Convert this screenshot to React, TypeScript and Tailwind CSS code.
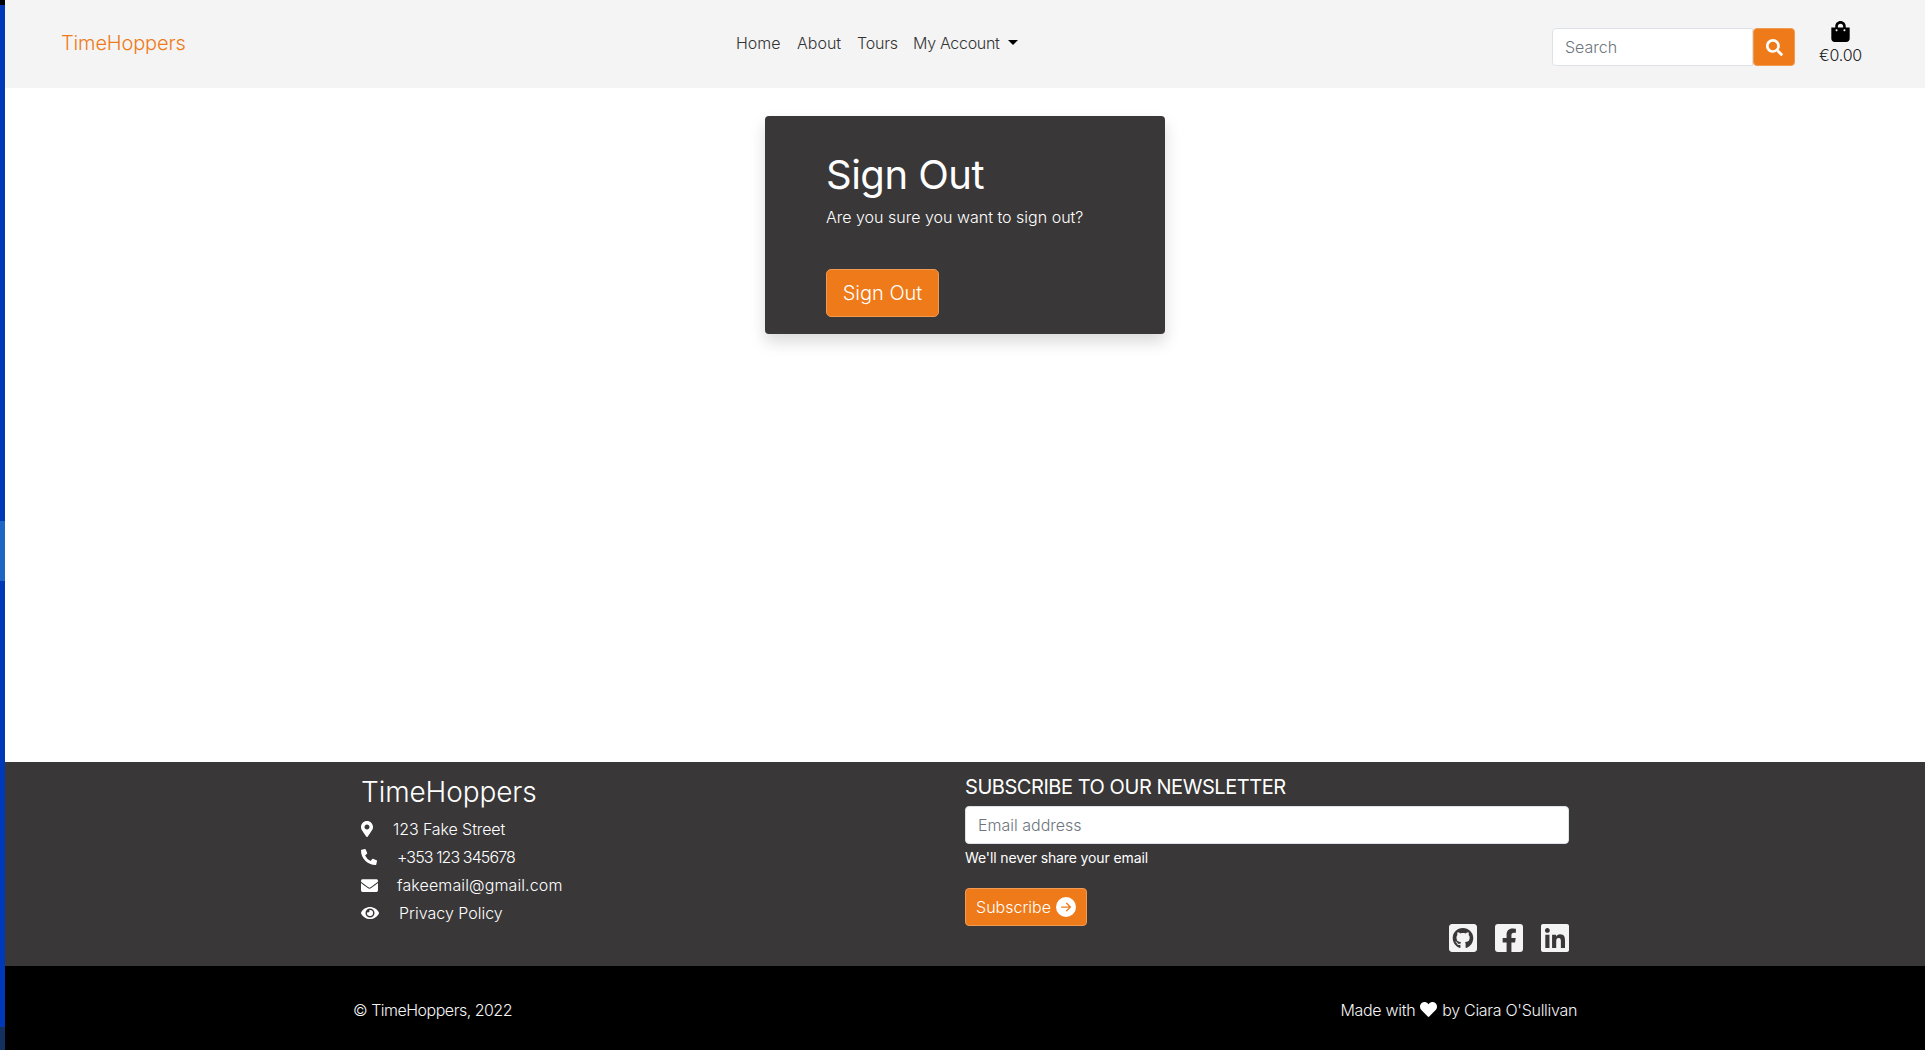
import { BsArrowRightCircleFill } from "react-icons/bs";
import {
  FaEnvelope,
  FaEye,
  FaFacebookSquare,
  FaGithubSquare,
  FaHeart,
  FaLinkedin,
  FaMapMarkerAlt,
  FaPhoneAlt,
  FaSearch,
  FaShoppingBag,
} from "react-icons/fa";

function Strip() {
  return (
    <div className="flex w-[5px] shrink-0 flex-col">
      <div className="h-[5px] bg-black" />
      <div className="h-[516px] bg-[#0039b8]" />
      <div className="h-[60px] bg-[#1f66c4]" />
      <div className="h-[446px] bg-[#0039b8]" />
      <div className="h-[23px] bg-[#14305f]" />
    </div>
  );
}

function Header() {
  return (
    <header className="flex h-[88px] shrink-0 items-center bg-[#f4f4f4] pl-[56px]">
      <a className="mt-[-2px] w-[675px] text-[20px] font-light leading-[30px] tracking-[-0.15px] text-[#ee7a1a]">TimeHoppers</a>
      <nav className="mt-[-2px] flex w-[816px] items-center text-[16px] font-light leading-6 text-[#333]">
        <a className="w-[61px]">Home</a>
        <a className="w-[60px]">About</a>
        <a className="w-[56px] tracking-[-0.2px]">Tours</a>
        <a className="tracking-[-0.3px]">My Account</a>
        <span className="ml-[8px] mt-[-2px] h-0 w-0 border-x-[5px] border-t-[5px] border-x-transparent border-t-black" />
      </nav>
      <form className="mt-[6px] flex h-[38px]">
        <input
          placeholder="Search"
          className="h-[38px] w-[201px] rounded-l-[4px] border border-[#dee2e6] bg-white px-3 text-[16px] font-light outline-none placeholder:text-[#6c757d]"
        />
        <button className="flex h-[38px] w-[42px] items-center justify-center rounded-[4px] border border-[#f09a52] bg-[#ee7a1a] text-white">
          <FaSearch className="text-[17px]" />
        </button>
      </form>
      <div className="ml-[25px] mt-[-2px] flex w-[41px] flex-col items-center">
        <FaShoppingBag className="text-[21px] text-black" />
        <span className="mt-[3px] text-[16px] font-light leading-5 tracking-[-0.25px] text-[#222]">€0.00</span>
      </div>
    </header>
  );
}

function SignOutCard() {
  return (
    <main className="flex flex-1 justify-center pt-[28px]">
      <section className="h-[218px] w-[400px] rounded-[4px] bg-[#393738] pl-[61px] pt-[35px] text-white shadow-[0_8px_16px_rgba(0,0,0,0.15)]">
        <h1 className="text-[40px] font-normal leading-[48px] tracking-[-0.5px]">Sign Out</h1>
        <p className="mt-[6px] text-[16px] font-light leading-6">Are you sure you want to sign out?</p>
        <button className="mt-[40px] h-[48px] w-[113px] rounded-[5px] border border-[#f09a52] bg-[#ee7a1a] text-[20px] font-light text-white">
          Sign Out
        </button>
      </section>
    </main>
  );
}

const contacts = [
  { icon: <FaMapMarkerAlt className="ml-[-2px] text-[16px]" />, text: "123 Fake Street", w: "w-[32px]", t: "tracking-[-0.1px]" },
  { icon: <FaPhoneAlt className="text-[16px]" />, text: "+353 123 345678", w: "w-[36px]", t: "tracking-[-0.9px]" },
  { icon: <FaEnvelope className="text-[17px]" />, text: "fakeemail@gmail.com", w: "w-[36px]", t: "tracking-[0.12px]" },
  { icon: <FaEye className="text-[18px]" />, text: "Privacy Policy", w: "w-[38px]", t: "" },
];

function Footer() {
  return (
    <footer className="shrink-0">
      <div className="flex h-[204px] justify-center bg-[#393738] text-white">
        <div className="flex w-[1208px] pt-[12px]">
          <div className="w-[604px]">
            <h2 className="text-[28px] font-light leading-[36px] tracking-[-0.1px]">TimeHoppers</h2>
            <ul className="mt-[5px] text-[16px] font-light">
              {contacts.map((c) => (
                <li key={c.text} className="flex h-[28px] items-center">
                  <span className={`${c.w} flex shrink-0`}>{c.icon}</span>
                  <span className={c.t}>{c.text}</span>
                </li>
              ))}
            </ul>
          </div>
          <div className="flex w-[604px] flex-col">
            <h3 className="text-[20px] font-normal uppercase leading-[26px] tracking-[-0.45px]">Subscribe to our newsletter</h3>
            <input
              placeholder="Email address"
              className="mt-[6px] h-[38px] w-full rounded-[4px] border border-[#dee2e6] bg-white px-3 text-[16px] font-light outline-none placeholder:text-[#6c757d]"
            />
            <p className="mt-[4px] text-[14px] font-normal leading-[20px] tracking-[-0.12px]">We'll never share your email</p>
            <button className="mt-[20px] flex h-[38px] w-[122px] items-center justify-center gap-[5px] rounded-[4px] border border-[#f09a52] bg-[#ee7a1a] text-[16px] font-light text-white">
              Subscribe
              <BsArrowRightCircleFill className="text-[20px]" />
            </button>
            <div className="mt-[-4px] flex justify-end gap-[14px] text-[32px] leading-none text-[#f4f4f4]">
              <FaGithubSquare />
              <FaFacebookSquare />
              <FaLinkedin className="mr-[-2px]" />
            </div>
          </div>
        </div>
      </div>
      <div className="flex h-[84px] items-center justify-center bg-black pt-[3px] text-[16px] font-light text-[#f4f4f4]">
        <div className="flex w-[1224px] items-center justify-between">
          <span className="tracking-[-0.5px]">© TimeHoppers, 2022</span>
          <span className="flex items-center gap-[5px] tracking-[-0.3px]">
            Made with <FaHeart className="text-[17px] text-white" /> by Ciara O'Sullivan
          </span>
        </div>
      </div>
    </footer>
  );
}

export default function App() {
  return (
    <div className="flex h-[1050px] font-['Inter',sans-serif]">
      <Strip />
      <div className="flex min-w-0 flex-1 flex-col bg-white">
        <Header />
        <SignOutCard />
        <Footer />
      </div>
    </div>
  );
}
